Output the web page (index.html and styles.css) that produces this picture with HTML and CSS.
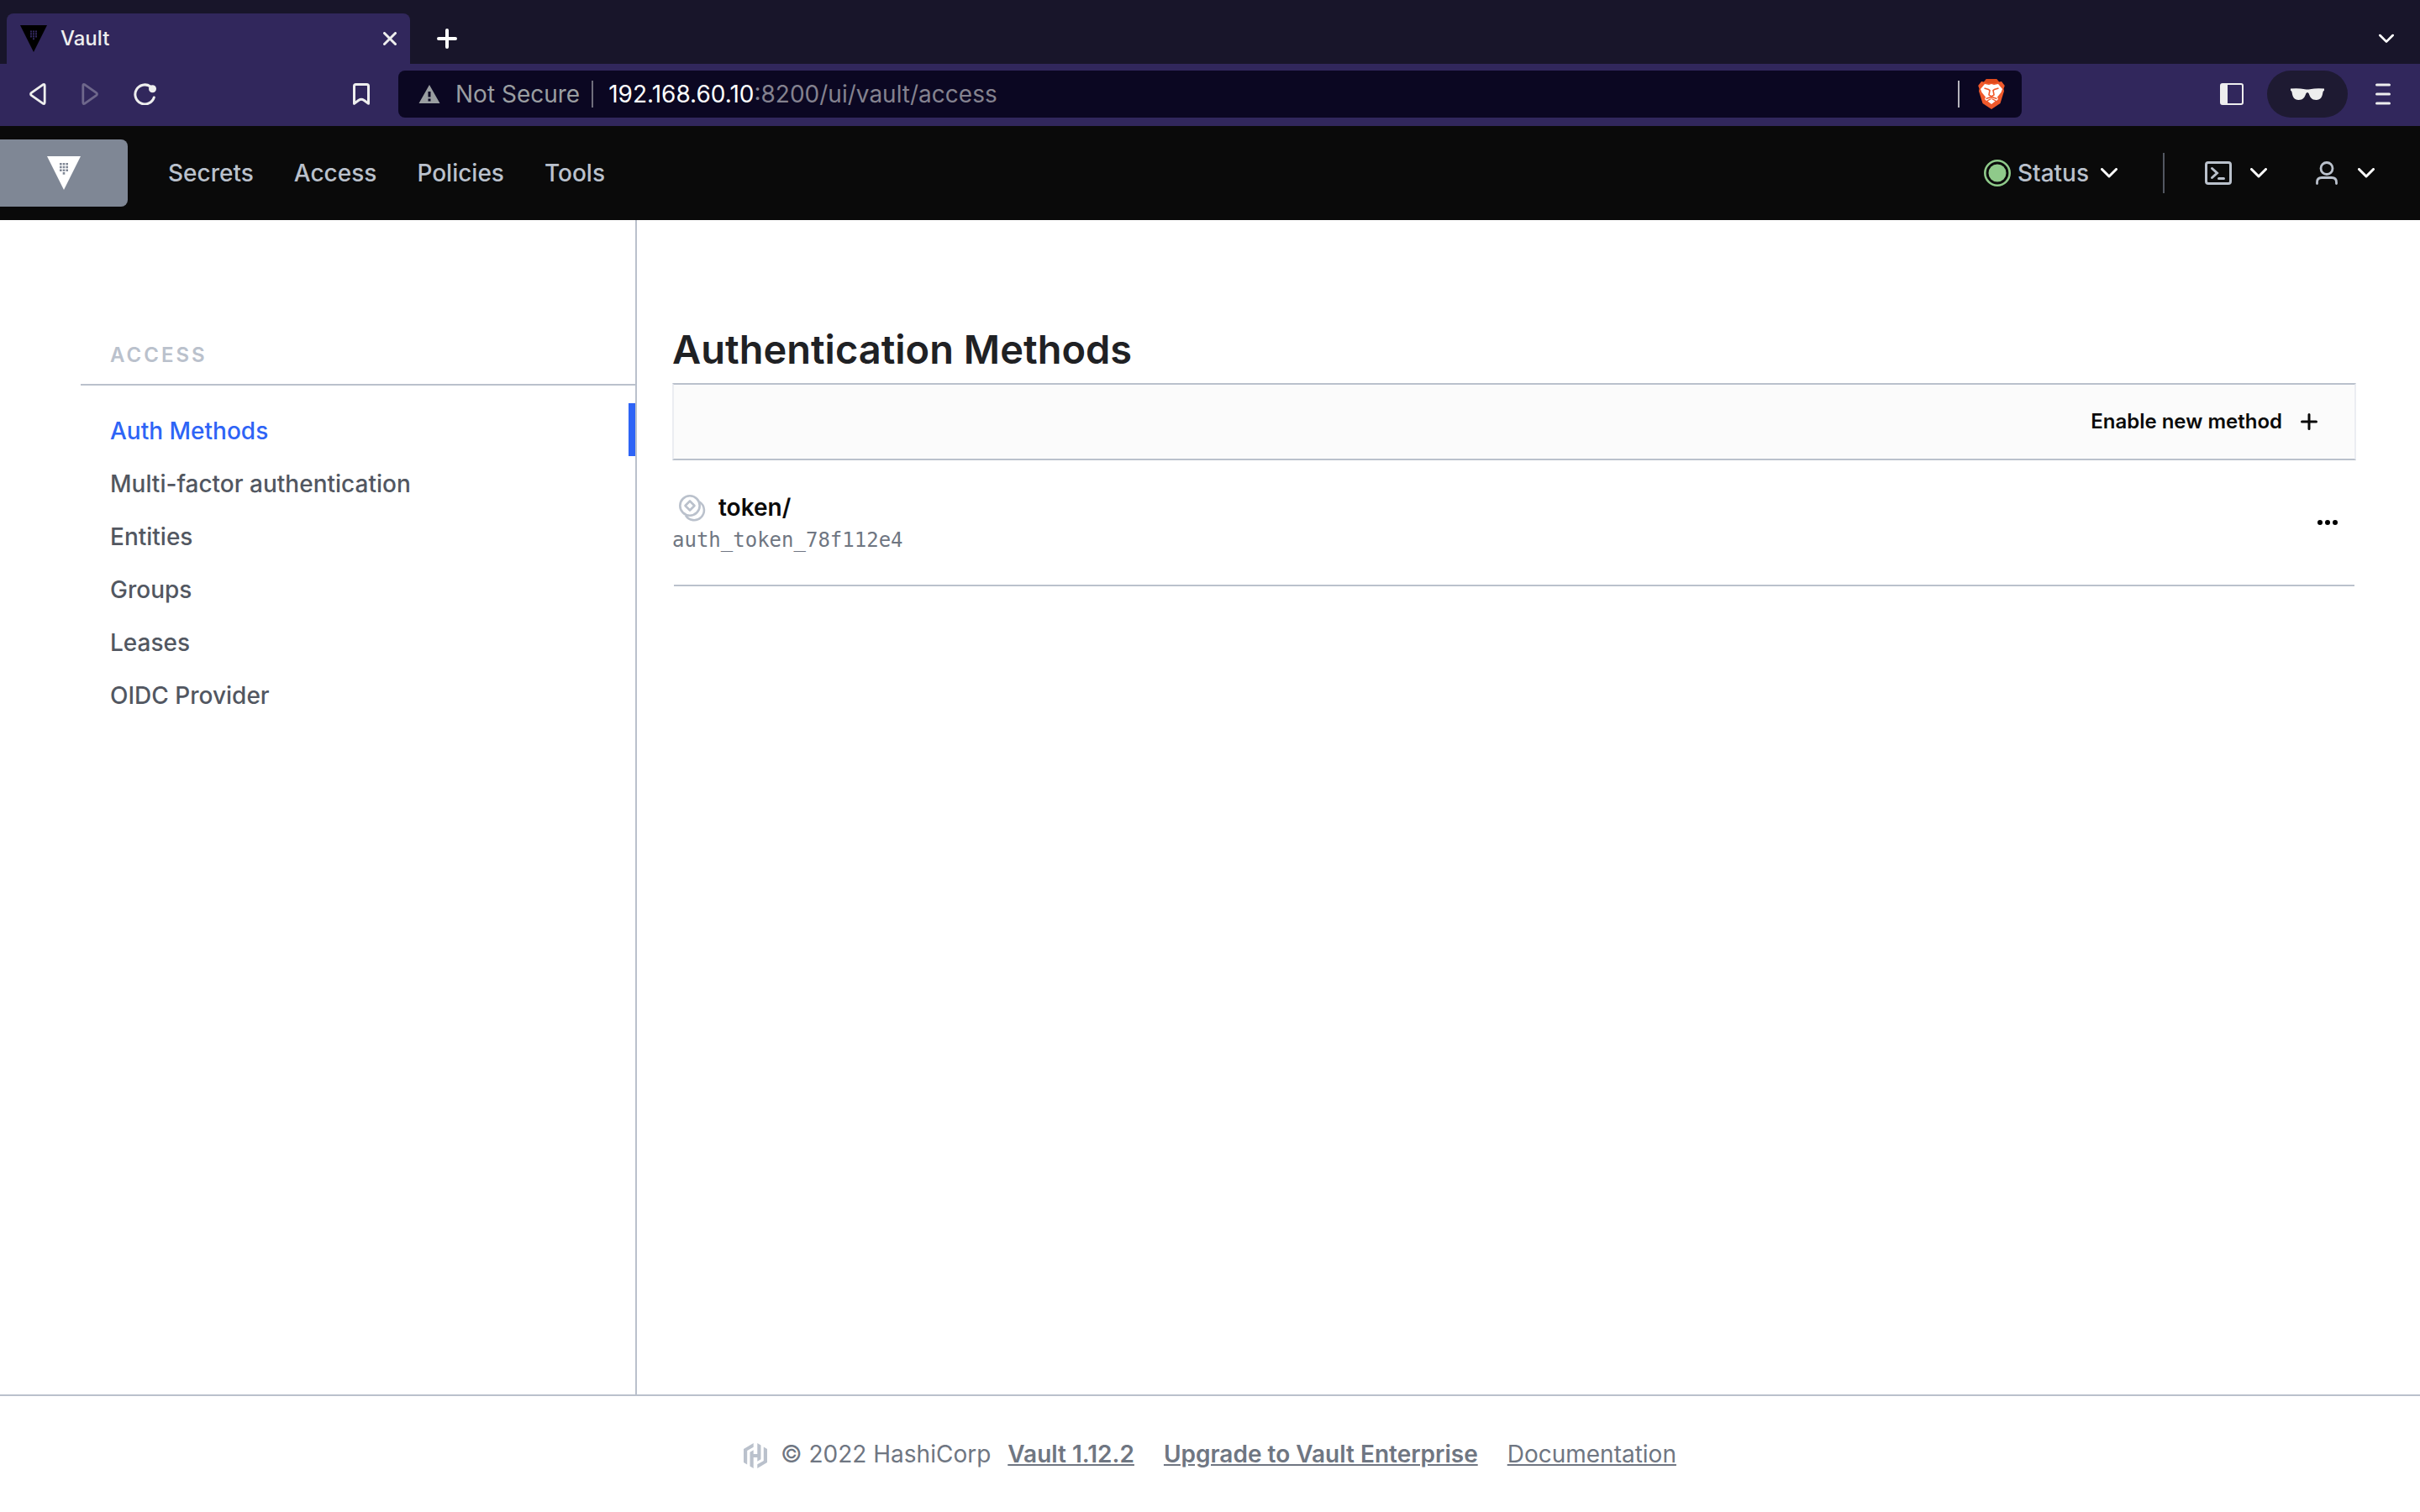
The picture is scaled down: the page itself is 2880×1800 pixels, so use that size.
FILE: index.html
```html
<!DOCTYPE html>
<html lang="en">
<head>
<meta charset="utf-8">
<title>Vault</title>
<link rel="stylesheet" href="styles.css">
</head>
<body>
<svg class="defs" width="0" height="0" aria-hidden="true">
  <symbol id="vault" viewBox="0 0 40 40">
    <path fill-rule="evenodd" d="M0 0h40L20 40zM15 8v2.600h2.600V8zm3.700 0v2.600h2.600V8zm3.700 0v2.600H25V8zM15 11.700v2.600h2.600v-2.600zm3.700 0v2.600h2.600v-2.600zm3.700 0v2.600H25v-2.600zM15 15.400V18h2.600v-2.600zm3.700 0V18h2.600v-2.600zm3.700 0V18H25v-2.600zm-3.700 3.700v2.600h2.600v-2.600z"/>
  </symbol>
  <symbol id="chevron" viewBox="0 0 20 12">
    <path d="M1.500 1.500L10 10l8.500-8.500" fill="none" stroke="currentColor" stroke-width="3" stroke-linecap="round" stroke-linejoin="round"/>
  </symbol>
</svg>

<div class="browser">
  <div class="tabs">
    <div class="tab">
      <svg class="favicon" width="32" height="32"><use href="#vault"/></svg>
      <span class="tab-title">Vault</span>
      <button class="plain" aria-label="Close tab"><svg width="16" height="16" viewBox="0 0 16 16"><path d="M1.500 1.500l13 13m0-13l-13 13" stroke="currentColor" stroke-width="3" stroke-linecap="round"/></svg></button>
    </div>
    <button class="plain new-tab" aria-label="New tab"><svg width="24" height="24" viewBox="0 0 24 24"><path d="M12 2v20M2 12h20" stroke="currentColor" stroke-width="4" stroke-linecap="round"/></svg></button>
    <button class="plain tab-list" aria-label="Search tabs"><svg width="18" height="12" viewBox="0 0 20 12"><use href="#chevron"/></svg></button>
  </div>
  <div class="toolbar">
    <div class="nav-buttons">
      <button class="plain" aria-label="Back"><svg width="20" height="26" viewBox="0 0 20 26"><path d="M16 1.800Q18.200.8 18.200 3v20q0 2.200-2.200 1.200L2.500 14.600q-2-1.600 0-3.200z" fill="none" stroke="currentColor" stroke-width="2.800" stroke-linejoin="round"/></svg></button>
      <button class="plain dim" aria-label="Forward"><svg width="20" height="26" viewBox="0 0 20 26"><path d="M4 1.800Q1.800.8 1.800 3v20q0 2.200 2.200 1.200l13.500-9.600q2-1.600 0-3.200z" fill="none" stroke="currentColor" stroke-width="2.800" stroke-linejoin="round"/></svg></button>
      <button class="plain" aria-label="Reload"><svg width="28" height="26" viewBox="0 0 28 26"><path d="M20 4A11.500 11.500 0 1 0 24.300 17" fill="none" stroke="currentColor" stroke-width="3" stroke-linecap="round"/><circle cx="22.500" cy="6.700" r="4.500" fill="currentColor"/></svg></button>
    </div>
    <button class="plain" aria-label="Bookmark"><svg width="20" height="26" viewBox="0 0 20 26"><path d="M1.500 24.300V3.500q0-2 2-2h13q2 0 2 2v20.800l-5.500-4q-3-2-6 0z" fill="none" stroke="currentColor" stroke-width="3" stroke-linejoin="round"/></svg></button>
    <div class="address">
      <svg width="26" height="24" viewBox="0 0 26 24"><path fill="#9a9ea1" fill-rule="evenodd" d="M13 1l12.500 22H.5zM11.500 9v6.500h3V9zm0 8.500v3h3v-3z"/></svg>
      <span class="insecure">Not Secure</span>
      <span class="rule"></span>
      <span class="url" role="textbox" contenteditable="true" spellcheck="false" aria-label="Address"><b>192.168.60.10</b>:8200/ui/vault/access</span>
      <span class="rule light"></span>
      <svg width="32" height="36" viewBox="0 0 32 36">
        <path fill="#f0592b" d="M7 3.500L10 0h12l3 3.500 3-.5 3.800 5-1.300 3.500.5 3-4.500 14.500L16 36 5.500 29 1 14.500l.5-3L.2 8 4 3z"/>
        <path fill="#e04a1c" d="M10 0h12l3 3.500-4 1.500H11L7 3.500z"/>
        <path fill="#fff" d="M8 6l5 1 3-1 3 1 5-1 5 6-1.500 4-4.500 5.500 1 2.500-2 2-4-2.500h-4L10 26l-2-2 1-2.500L4.500 16 3 12zM16 24l4.500 2.500L16 30l-4.500-3.500z"/>
        <path fill="none" stroke="#f0592b" stroke-width="1.600" d="M7.500 11l5 1.500 1.500 1-1 5.500 3 2 3-2-1-5.500 1.500-1 5-1.500M9.500 23.500l4.500-1.500h4l4.500 1.500M16 21v1.500"/>
      </svg>
    </div>
    <div class="tools">
      <button class="plain" aria-label="Sidebar"><svg width="28" height="26" viewBox="0 0 28 26"><rect x="1" y="1" width="26" height="24" rx="2" fill="none" stroke="currentColor" stroke-width="2"/><path d="M1 1h8v24H1z" fill="currentColor"/></svg></button>
      <button class="plain private" aria-label="Private window"><svg width="40" height="14" viewBox="0 0 40 14"><path fill="currentColor" d="M0 .5Q9-.5 17 1.200q3 .6 6 0Q31-.5 40 .5v2.200q-1.300.6-1.600 2.300C37.500 10.500 36 14 30.500 14S23 10.500 21.800 6.500Q20 3.500 18.200 6.500C17 10.500 15 14 9.500 14S2.500 10.500 1.600 5Q1.300 3.300 0 2.700z"/></svg></button>
      <button class="plain" aria-label="Menu"><svg width="18" height="26" viewBox="0 0 18 26"><path d="M1.500 2h15M1.500 13h15M1.500 24h15" stroke="currentColor" stroke-width="3" stroke-linecap="round"/></svg></button>
    </div>
  </div>
</div>

<header class="topbar">
  <a class="logo" href="#" aria-label="Vault home"><svg width="40" height="40"><use href="#vault"/></svg></a>
  <nav class="topnav">
    <a href="#">Secrets</a>
    <a href="#">Access</a>
    <a href="#">Policies</a>
    <a href="#">Tools</a>
  </nav>
  <button class="plain status"><svg width="32" height="32" viewBox="0 0 32 32"><circle cx="16" cy="16" r="14.700" fill="none" stroke="#8fca8a" stroke-width="2.600"/><circle cx="16" cy="16" r="10.500" fill="#8fca8a"/></svg><span>Status</span><svg class="white" width="20" height="12"><use href="#chevron"/></svg></button>
  <span class="divider"></span>
  <button class="plain menu" aria-label="Console"><svg width="32" height="28" viewBox="0 0 32 28"><rect x="1.500" y="1.500" width="29" height="25" rx="2.500" fill="none" stroke="currentColor" stroke-width="3"/><path d="M8.500 8.500l6 5.500-6 5.500M16.500 20.500h6" fill="none" stroke="currentColor" stroke-width="3" stroke-linecap="round"/></svg><svg class="white" width="20" height="12"><use href="#chevron"/></svg></button>
  <button class="plain menu user" aria-label="Account"><svg width="26" height="28" viewBox="0 0 26 28"><ellipse cx="13" cy="8.500" rx="7" ry="7" fill="none" stroke="currentColor" stroke-width="2.800"/><path d="M1.500 26.500V25q0-5.500 5.500-5.500h12q5.500 0 5.500 5.500v1.500" fill="none" stroke="currentColor" stroke-width="2.800" stroke-linecap="round"/></svg><svg class="white" width="20" height="12"><use href="#chevron"/></svg></button>
</header>

<div class="body">
  <aside class="sidebar">
    <h2 class="menu-label">Access</h2>
    <ul class="menu-list">
      <li><a class="active" href="#">Auth Methods</a></li>
      <li><a href="#">Multi-factor authentication</a></li>
      <li><a href="#">Entities</a></li>
      <li><a href="#">Groups</a></li>
      <li><a href="#">Leases</a></li>
      <li><a href="#">OIDC Provider</a></li>
    </ul>
  </aside>
  <main class="content">
    <h1>Authentication Methods</h1>
    <div class="actions">
      <a href="#">Enable new method<svg width="20" height="20" viewBox="0 0 20 20"><path d="M10 1.500v17M1.500 10h17" stroke="currentColor" stroke-width="3" stroke-linecap="round"/></svg></a>
    </div>
    <div class="row">
      <div class="method">
        <a class="method-name" href="#"><svg width="32" height="34" viewBox="0 -2 32 34"><g fill="none" stroke="#bac1cc" stroke-width="2.600"><circle cx="13" cy="13" r="11.700"/><path d="M13 7.500l5.500 5.500-5.500 5.500L7.500 13z" stroke-linejoin="round"/><path d="M24.500 8.500A11.800 11.800 0 1 1 8 24.500"/></g></svg>token/</a>
        <code>auth_token_78f112e4</code>
      </div>
      <button class="plain more" aria-label="More"><svg width="24" height="6" viewBox="0 0 24 6"><circle cx="3" cy="3" r="3"/><circle cx="12" cy="3" r="3"/><circle cx="21" cy="3" r="3"/></svg></button>
    </div>
  </main>
</div>

<footer class="footer">
  <svg width="28" height="34" viewBox="0 -4 28 34"><path fill="#bac1cc" d="M11.700 0v4.700L4.200 9v16.400L0 23V7zM16.300 0l4.200 2.400v16.900l-4.200 2.500V17h-4.600v13l-4.200-2.400V10.700l4.200-2.500V13h4.600zM23.800 4.600L28 7v16l-11.700 7v-4.700l7.500-4.300z"/></svg>
  <span class="copyright">© 2022 HashiCorp</span>
  <a class="strong" href="#">Vault 1.12.2</a>
  <a class="strong" href="#">Upgrade to Vault Enterprise</a>
  <a href="#">Documentation</a>
</footer>
</body>
</html>
```
FILE: styles.css
```css
* { box-sizing: border-box; }

body {
  margin: 0;
  min-height: 100vh;
  display: flex;
  flex-direction: column;
  background: #fff;
  color: #1f2124;
  font-family: Inter, "Liberation Sans", sans-serif;
  font-size: 28px;
  line-height: 42px;
}

a { color: inherit; text-decoration: none; }
svg { display: block; flex: none; }
.defs { position: absolute; }

.plain {
  display: flex;
  align-items: center;
  padding: 0;
  border: 0;
  background: none;
  color: inherit;
  font: inherit;
}

/* Browser window frame */
.browser { background: #18152a; color: #eee; }
.tabs { display: flex; align-items: center; height: 76px; padding: 16px 31px 0 8px; }
.tab {
  display: flex;
  align-items: center;
  width: 480px;
  height: 60px;
  padding: 0 16px;
  border-radius: 8px 8px 0 0;
  background: #31275c;
}
.favicon { fill: #000; }
.tab-title { flex: 1; padding-left: 16px; font-size: 24px; font-weight: 500; }
.new-tab { margin-left: 32px; color: #fff; }
.tab-list { margin-left: auto; color: #fff; }

.toolbar {
  display: flex;
  align-items: center;
  height: 74px;
  padding: 0 35px 2px 35px;
  background: #31275c;
}
.nav-buttons { display: flex; flex: none; gap: 42px; width: 385px; }
.dim { opacity: .32; }
.address {
  display: flex;
  align-items: center;
  flex: 1;
  height: 56px;
  margin: 0 236px 0 34px;
  padding: 0 20px 0 24px;
  border-radius: 8px;
  background: #0b0722;
  color: #84828f;
}
.insecure { padding: 0 14px 0 18px; color: #9a9ea1; }
.rule { width: 2px; height: 32px; background: #6f6e7c; }
.rule.light { margin-right: 22px; background: #b5b4bc; }
.url { flex: 1; margin-left: 18px; outline: 0; }
.url b { color: #fff; font-weight: 400; }
.tools { display: flex; align-items: center; }
.private {
  justify-content: center;
  width: 96px;
  height: 56px;
  margin: 0 33px 0 28px;
  border-radius: 28px;
  background: #1e1a32;
}

/* Vault header */
.topbar {
  display: flex;
  align-items: center;
  height: 112px;
  padding-right: 54px;
  background: #0a0a0a;
  color: #bac1cc;
  font-weight: 500;
}
.logo {
  display: flex;
  align-items: center;
  justify-content: center;
  width: 152px;
  height: 80px;
  border-radius: 0 8px 8px 0;
  background: #7f8795;
  fill: #fff;
}
.topnav { display: flex; flex: 1; gap: 48px; padding-left: 48px; }
.status span { padding: 0 14px 0 8px; }
.white { color: #fff; }
.divider { width: 2px; height: 48px; margin: 0 48px 0 54px; background: #525761; }
.menu { gap: 22px; }
.user { gap: 24px; margin-left: 58px; }

/* Page body */
.body { display: flex; flex: 1; }
.sidebar {
  flex: none;
  width: 758px;
  padding: 140px 0 0 96px;
  border-right: 2px solid #bac1cc;
}
.menu-label {
  margin: 0;
  padding: 0 35px 13px;
  border-bottom: 2px solid #bac1cc;
  color: #bac1cc;
  font-size: 24px;
  font-weight: 600;
  letter-spacing: 3px;
  text-transform: uppercase;
}
.menu-list {
  margin: 0;
  padding: 21px 0 0;
  list-style: none;
  color: #525761;
  font-weight: 500;
}
.menu-list a { display: block; padding: 12px 28px 9px 35px; border-right: 8px solid transparent; }
.menu-list .active { border-color: #2e64f6; color: #2e64f6; }

.content { flex: 1; min-width: 0; padding: 124px 76px 48px 42px; }
h1 { margin: 0; font-size: 47px; font-weight: 600; line-height: 60px; }
.actions {
  display: flex;
  align-items: center;
  justify-content: flex-end;
  height: 92px;
  margin-top: 10px;
  padding: 0 44px;
  border: 2px solid #ebedf2;
  border-top-color: #bac1cc;
  border-bottom-color: #bac1cc;
  background: #fbfbfb;
  color: #0a0a0a;
  font-size: 24px;
  font-weight: 600;
}
.actions a { display: flex; align-items: center; gap: 22px; }
.row {
  display: flex;
  align-items: center;
  justify-content: space-between;
  height: 150px;
  margin: 0 2px;
  padding-right: 20px;
  border-bottom: 2px solid #bac1cc;
}
.method { margin-left: -2px; }
.method-name { display: flex; align-items: center; gap: 15px; padding-left: 8px; color: #0a0a0a; font-weight: 600; }
code { display: block; color: #6f7682; font-family: "DejaVu Sans Mono", monospace; font-size: 24px; line-height: 36px; }

.footer {
  display: flex;
  align-items: center;
  justify-content: center;
  height: 140px;
  border-top: 2px solid #bac1cc;
  color: #6f7682;
}
.footer a { margin-left: 35px; text-decoration: underline; }
.footer .copyright { margin-left: 16px; }
.footer .copyright + a { margin-left: 20px; }
.strong { font-weight: 600; }
```
